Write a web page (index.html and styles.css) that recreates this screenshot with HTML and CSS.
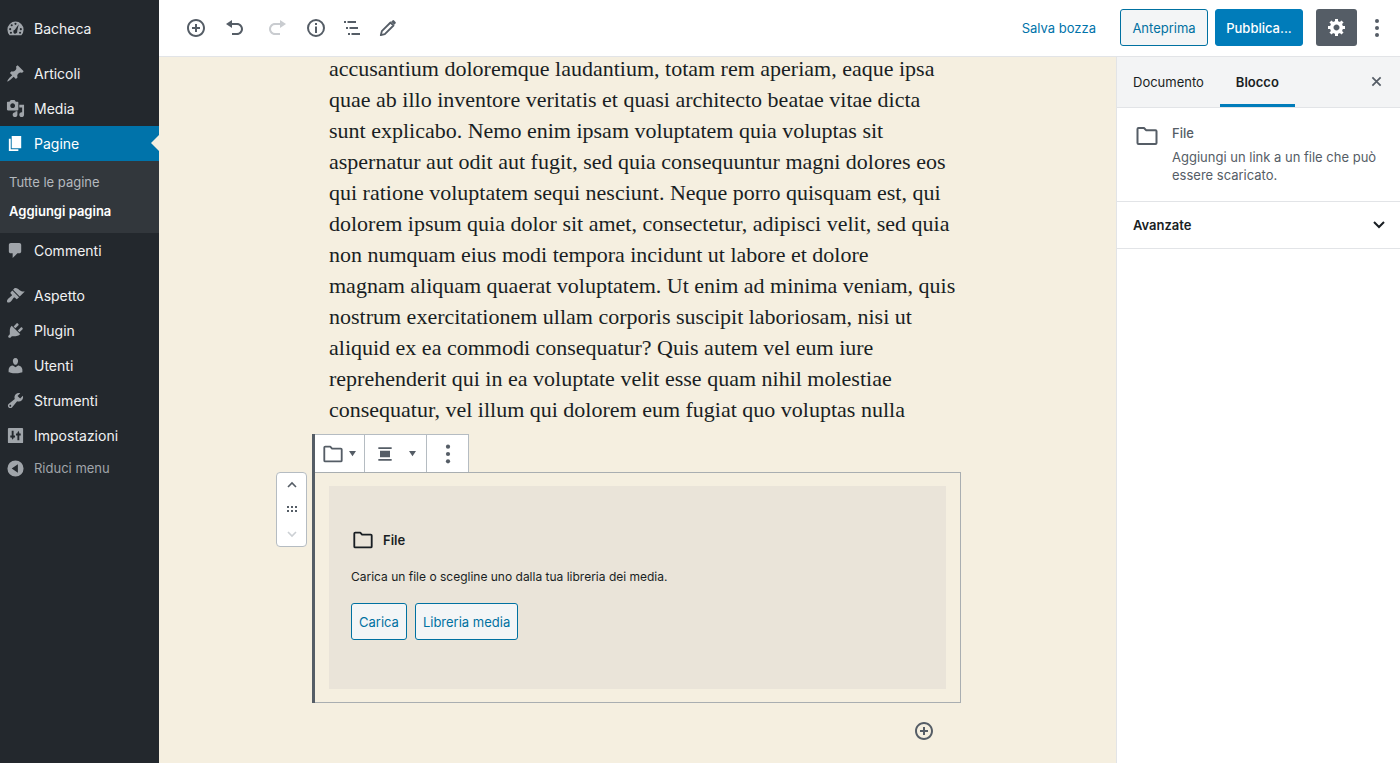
FILE: index.html
```html
<!DOCTYPE html>
<html lang="it">
<head>
<meta charset="utf-8">
<title>Aggiungi pagina</title>
<link rel="stylesheet" href="styles.css">
</head>
<body>
<svg class="sprite" aria-hidden="true">
  <symbol id="folder" viewBox="0 0 24 24"><path d="M3.500 4h5.500l2 2.200h9.500q1 0 1 1v11.800q0 1-1 1h-17q-1 0-1-1V5q0-1 1-1z" fill="none" stroke="currentColor" stroke-width="2" stroke-linejoin="round"/></symbol>
  <symbol id="insert" viewBox="0 0 20 20"><path d="M10 1c-5 0-9 4-9 9s4 9 9 9 9-4 9-9-4-9-9-9zm0 16c-3.9 0-7-3.1-7-7s3.1-7 7-7 7 3.1 7 7-3.1 7-7 7zm1-11H9v3H6v2h3v3h2v-3h3V9h-3V6z"/></symbol>
  <symbol id="dots" viewBox="0 0 20 20"><circle cx="10" cy="3" r="2"/><circle cx="10" cy="10" r="2"/><circle cx="10" cy="17" r="2"/></symbol>
</svg>
<div class="app">
  <nav class="menu" aria-label="Menu principale">
    <a class="item" href="#"><svg viewBox="0 0 20 20"><path fill-rule="evenodd" d="M3.8 17A8.6 8.6 0 0 1 1.5 11.2a8.5 8.5 0 0 1 17 0A8.6 8.6 0 0 1 16.2 17zM10 4a1.1 1.1 0 1 0 0 2.2A1.1 1.1 0 0 0 10 4zM6 5.5a1.1 1.1 0 1 0 0 2.2 1.1 1.1 0 0 0 0-2.2zM4.4 9.6a1.1 1.1 0 1 0 0 2.2 1.1 1.1 0 0 0 0-2.2zm11.2 0a1.1 1.1 0 1 0 0 2.2 1.1 1.1 0 0 0 0-2.2zM13.4 5.6 9.3 11.3a2.1 2.1 0 1 0 2.5 1.4zM5.2 13.4a1.1 1.1 0 1 0 0 2.2 1.1 1.1 0 0 0 0-2.2zm9.6 0a1.1 1.1 0 1 0 0 2.2 1.1 1.1 0 0 0 0-2.2z"/></svg>Bacheca</a>
    <a class="item group" href="#"><svg viewBox="0 0 20 20"><path d="M10.44 3.02l1.82-1.82 6.36 6.35-1.83 1.82c-1.05-.68-2.48-.57-3.41.36l-.75.75c-.92.93-1.04 2.35-.35 3.41l-1.83 1.82-2.41-2.41-2.8 2.79c-.42.42-3.38 2.71-3.8 2.29s1.86-3.39 2.28-3.81l2.79-2.79L4.1 9.36l1.83-1.82c1.05.69 2.48.57 3.4-.36l.75-.75c.93-.92 1.05-2.35.36-3.41z"/></svg>Articoli</a>
    <a class="item" href="#"><svg viewBox="0 0 20 20"><path d="M13 11V4c0-.55-.45-1-1-1h-1.67L9 1H5L3.67 3H2c-.55 0-1 .45-1 1v7c0 .55.45 1 1 1h10c.55 0 1-.45 1-1zM7 4.5c1.38 0 2.5 1.12 2.5 2.5S8.38 9.5 7 9.5 4.5 8.38 4.5 7 5.62 4.5 7 4.5zM14 6h5v10.5c0 1.38-1.12 2.5-2.5 2.5S14 17.88 14 16.5s1.12-2.5 2.5-2.5c.17 0 .34.02.5.05V9h-3V6zm-4 8.05V13h2v3.5c0 1.38-1.12 2.5-2.5 2.5S7 17.88 7 16.5 8.12 14 9.5 14c.17 0 .34.02.5.05z"/></svg>Media</a>
    <a class="item current" href="#"><svg viewBox="0 0 20 20"><path d="M6 15V2h10v13H6zm-1 1h8v2H3V5h2v11z"/></svg>Pagine</a>
    <div class="submenu">
      <a href="#">Tutte le pagine</a>
      <a class="selected" href="#">Aggiungi pagina</a>
    </div>
    <a class="item" href="#"><svg viewBox="0 0 20 20"><path d="M5 2h9c1.1 0 2 .9 2 2v7c0 1.1-.9 2-2 2h-2l-5 5v-5H5c-1.1 0-2-.9-2-2V4c0-1.1.9-2 2-2z"/></svg>Commenti</a>
    <a class="item group" href="#"><svg viewBox="0 0 20 20"><path d="M14.48 11.06L7.41 3.99l1.5-1.5c.5-.56 2.3-.47 3.51.32 1.21.8 1.43 1.28 2.91 2.1 1.18.64 2.45 1.26 4.45.85zm-.71.71L6.7 4.7 4.93 6.47c-.39.39-.39 1.02 0 1.41l1.06 1.06c.39.39.39 1.03 0 1.42-.6.6-1.43 1.11-2.21 1.69-.35.26-.7.53-1.01.84C1.43 14.23.4 16.08 1.4 17.07c.99 1 2.84-.03 4.18-1.36.31-.31.58-.66.85-1.02.57-.78 1.08-1.61 1.69-2.21.39-.39 1.02-.39 1.41 0l1.06 1.06c.39.39 1.02.39 1.41 0z"/></svg>Aspetto</a>
    <a class="item" href="#"><svg viewBox="0 0 20 20"><path d="M13.11 4.36L9.87 7.6 8 5.73l3.24-3.24c.35-.34 1.05-.2 1.56.32.52.51.66 1.21.31 1.55zm-8 1.77l.91-1.12 9.01 9.01-1.19.84c-.71.71-2.63 1.16-3.82 1.16H6.14L4.9 17.26c-.59.59-1.54.59-2.12 0-.59-.58-.59-1.53 0-2.12l1.24-1.24v-3.88c0-1.13.4-3.19 1.09-3.89zm7.26 3.97l3.24-3.24c.34-.35 1.04-.21 1.55.31.52.51.66 1.21.31 1.55l-3.24 3.25z"/></svg>Plugin</a>
    <a class="item" href="#"><svg viewBox="0 0 20 20"><path d="M10 9.25c-2.27 0-2.73-3.44-2.73-3.44C7 4.02 7.82 2 9.97 2c2.16 0 2.98 2.02 2.71 3.81 0 0-.41 3.44-2.68 3.44zm0 2.57L12.72 10c2.39 0 4.52 2.33 4.52 4.53v2.49s-3.65 1.13-7.24 1.13c-3.65 0-7.24-1.13-7.24-1.13v-2.49c0-2.25 1.94-4.48 4.47-4.48z"/></svg>Utenti</a>
    <a class="item" href="#"><svg viewBox="0 0 20 20"><path d="M16.68 9.77c-1.34 1.34-3.3 1.67-4.95.99l-5.41 6.52c-.99.99-2.59.99-3.58 0s-.99-2.59 0-3.57l6.52-5.42c-.68-1.65-.35-3.61.99-4.95 1.28-1.28 3.12-1.62 4.72-1.06l-2.89 2.89 2.82 2.82 2.86-2.87c.53 1.58.18 3.39-1.08 4.65zM3.81 16.21c.4.39 1.04.39 1.43 0 .4-.4.4-1.04 0-1.43-.39-.4-1.03-.4-1.43 0-.39.39-.39 1.03 0 1.43z"/></svg>Strumenti</a>
    <a class="item" href="#"><svg viewBox="0 0 20 20"><path fill-rule="evenodd" d="M3 2h14q1 0 1 1v14q0 1-1 1H3q-1 0-1-1V3q0-1 1-1zm3 3v5H4.500v2H6v.5l1 2 1-2V12h1.500v-2H8V5zm6.500 10h1.500v-5h1.500V8H14V7l-1-2-1 2v1h-1.500v2H12v5z"/></svg>Impostazioni</a>
    <button class="item collapse" type="button"><svg viewBox="0 0 20 20"><path fill-rule="evenodd" d="M10 1.500a8.500 8.500 0 1 0 0 17 8.500 8.500 0 0 0 0-17zM12.500 5.500v9L6 10z"/></svg>Riduci menu</button>
  </nav>

  <div class="workspace">
    <header class="topbar">
      <div class="tools">
        <button type="button" aria-label="Aggiungi blocco"><svg viewBox="0 0 20 20"><use href="#insert"/></svg></button>
        <button class="wide" type="button" aria-label="Annulla"><svg viewBox="0 0 20 20"><path d="M12 5H7V2L1 6l6 4V7h5c2.200 0 4 1.800 4 4s-1.800 4-4 4H7v2h5c3.300 0 6-2.700 6-6s-2.700-6-6-6z"/></svg></button>
        <button class="wide" type="button" aria-label="Ripeti" disabled><svg viewBox="0 0 20 20"><path d="M8 5h5V2l6 4-6 4V7H8c-2.200 0-4 1.800-4 4s1.800 4 4 4h5v2H8c-3.300 0-6-2.700-6-6s2.700-6 6-6z"/></svg></button>
        <button type="button" aria-label="Struttura del contenuto"><svg viewBox="0 0 20 20"><path fill-rule="evenodd" d="M10 1a9 9 0 1 0 0 18 9 9 0 0 0 0-18zm0 2a7 7 0 1 1 0 14 7 7 0 0 1 0-14zM9 5h2v2H9zM9 8.500h2V15H9z"/></svg></button>
        <button type="button" aria-label="Navigazione blocchi"><svg viewBox="0 0 20 20"><path d="M2 3h2v2H2zM5.500 3H14v2H5.500zM4 9h2v2H4zM7.500 9H16v2H7.500zM6 15h2v2H6zM9.500 15H18v2H9.500z"/></svg></button>
        <button type="button" aria-label="Modalità"><svg viewBox="0 0 20 20"><path d="M2.800 17.200l1-4 8.700-8.700 3 3-8.700 8.700z" fill="none" stroke="currentColor" stroke-width="1.800" stroke-linejoin="round"/><path d="M13.200 3.800l1.300-1.300q.8-.8 1.600 0l1.400 1.400q.8.800 0 1.600l-1.300 1.300z"/></svg></button>
      </div>
      <div class="actions">
        <button class="link" type="button">Salva bozza</button>
        <button class="btn" type="button">Anteprima</button>
        <button class="btn primary" type="button">Pubblica...</button>
        <button class="gear" type="button" aria-label="Impostazioni"><svg viewBox="0 0 19 21"><path fill-rule="evenodd" d="M18 12h-2.180c-.17.7-.44 1.350-.81 1.930l1.540 1.540-2.100 2.100-1.540-1.540c-.58.36-1.230.63-1.910.79V19H8v-2.180c-.68-.16-1.330-.43-1.910-.79l-1.540 1.540-2.120-2.120 1.540-1.540c-.36-.58-.63-1.230-.79-1.910H1V9.030h2.170c.16-.7.44-1.350.8-1.940L2.430 5.550l2.100-2.100 1.540 1.540c.58-.37 1.240-.64 1.930-.81V2h3v2.180c.68.16 1.330.43 1.910.79l1.540-1.540 2.120 2.120-1.540 1.540c.36.59.64 1.240.8 1.940H18V12zm-8.500 1.500c1.660 0 3-1.340 3-3s-1.340-3-3-3-3 1.340-3 3 1.340 3 3 3z"/></svg></button>
        <button class="more" type="button" aria-label="Altro"><svg viewBox="0 0 20 20"><use href="#dots"/></svg></button>
      </div>
    </header>

    <div class="body">
      <main class="canvas">
        <div class="content">
          <p class="prose">accusantium doloremque laudantium, totam rem aperiam, eaque ipsa<br>quae ab illo inventore veritatis et quasi architecto beatae vitae dicta<br>sunt explicabo. Nemo enim ipsam voluptatem quia voluptas sit<br>aspernatur aut odit aut fugit, sed quia consequuntur magni dolores eos<br>qui ratione voluptatem sequi nesciunt. Neque porro quisquam est, qui<br>dolorem ipsum quia dolor sit amet, consectetur, adipisci velit, sed quia<br>non numquam eius modi tempora incidunt ut labore et dolore<br>magnam aliquam quaerat voluptatem. Ut enim ad minima veniam, quis<br>nostrum exercitationem ullam corporis suscipit laboriosam, nisi ut<br>aliquid ex ea commodi consequatur? Quis autem vel eum iure<br>reprehenderit qui in ea voluptate velit esse quam nihil molestiae<br>consequatur, vel illum qui dolorem eum fugiat quo voluptas nulla</p>
          <section class="selection">
            <div class="mover">
              <button type="button" aria-label="Sposta in alto"><svg viewBox="0 0 12 12"><path d="M2 8l4-4 4 4" fill="none" stroke="currentColor" stroke-width="1.600"/></svg></button>
              <button type="button" aria-label="Trascina"><svg viewBox="0 0 12 12"><path d="M1 3h2v2H1zM5 3h2v2H5zM9 3h2v2H9zM1 7h2v2H1zM5 7h2v2H5zM9 7h2v2H9z"/></svg></button>
              <button type="button" aria-label="Sposta in basso" disabled><svg viewBox="0 0 12 12"><path d="M2 4l4 4 4-4" fill="none" stroke="currentColor" stroke-width="1.600"/></svg></button>
            </div>
            <div class="toolbar">
              <button class="type" type="button" aria-label="Cambia tipo di blocco"><svg class="icon" viewBox="0 0 24 24"><use href="#folder"/></svg><svg class="caret" viewBox="0 0 8 8"><path d="M0 1h8L4 7z"/></svg></button>
              <button class="align" type="button" aria-label="Allineamento"><svg class="icon" viewBox="0 0 24 24"><path d="M4 4h16v2H4zM6 8h12v8H6zM4 18h16v2H4z"/></svg><svg class="caret" viewBox="0 0 8 8"><path d="M0 1h8L4 7z"/></svg></button>
              <button class="options" type="button" aria-label="Altre opzioni"><svg class="icon" viewBox="0 0 24 24"><circle cx="12" cy="4" r="2.300"/><circle cx="12" cy="12" r="2.300"/><circle cx="12" cy="20" r="2.300"/></svg></button>
            </div>
            <div class="frame">
              <div class="placeholder">
                <h2><svg viewBox="0 0 24 24"><use href="#folder"/></svg>File</h2>
                <p>Carica un file o scegline uno dalla tua libreria dei media.</p>
                <div class="choices">
                  <button class="btn" type="button">Carica</button>
                  <button class="btn" type="button">Libreria media</button>
                </div>
              </div>
            </div>
          </section>
          <button class="append" type="button" aria-label="Aggiungi blocco"><svg viewBox="0 0 20 20"><use href="#insert"/></svg></button>
        </div>
      </main>

      <aside class="settings">
        <div class="tabs">
          <button type="button">Documento</button>
          <button class="active" type="button">Blocco</button>
          <button class="close" type="button" aria-label="Chiudi"><svg viewBox="0 0 12 12"><path d="M1.500 1.500l9 9M10.500 1.500l-9 9" fill="none" stroke="currentColor" stroke-width="1.900"/></svg></button>
        </div>
        <div class="card">
          <svg viewBox="0 0 24 24"><use href="#folder"/></svg>
          <div>
            <h2>File</h2>
            <p>Aggiungi un link a un file che può essere scaricato.</p>
          </div>
        </div>
        <button class="panel" type="button">Avanzate<svg viewBox="0 0 14 14"><path d="M2 4l5 5 5-5" fill="none" stroke="currentColor" stroke-width="2"/></svg></button>
      </aside>
    </div>
  </div>
</div>
</body>
</html>
```
FILE: styles.css
```css
* { box-sizing: border-box; }
body { margin: 0; font: 13px/18px Inter, "Liberation Sans", sans-serif; color: #191e23; }
button { margin: 0; padding: 0; border: 0; background: none; font: inherit; color: inherit; cursor: pointer; }
h2, p { margin: 0; }
a { text-decoration: none; }
svg { display: block; flex: none; fill: currentColor; }
.sprite { position: absolute; width: 0; height: 0; }
.app { display: flex; height: 100vh; overflow: hidden; background: #fff; }

.menu { flex: none; width: 159px; padding-top: 11px; background: #23282d; }
.item { position: relative; display: flex; align-items: center; gap: 9px; width: 100%; height: 35px; padding-left: 6px; font-size: 14px; color: #f1f2f3; }
.item svg { width: 19px; height: 19px; color: #a0a5aa; }
.group { margin-top: 10px; }
.current { background: #0073aa; color: #fff; }
.current svg { color: #fff; }
.current::after { content: ""; position: absolute; right: 0; top: 9px; border: 8px solid transparent; border-left: 0; border-right-color: #f5efe0; }
.submenu { padding: 7px 0; background: #32373c; }
.submenu a { display: block; padding-left: 9px; line-height: 29px; color: #b4b9be; }
.submenu .selected { font-weight: 600; color: #fff; }
.collapse { height: 30px; font-size: 13px; color: #a0a5aa; }

.workspace { flex: 1; min-width: 0; display: flex; flex-direction: column; }
.topbar { flex: none; display: flex; align-items: center; justify-content: space-between; height: 57px; padding: 0 13px 1px 19px; border-bottom: 1px solid #e2e4e7; }
.tools, .actions { display: flex; align-items: center; }
.tools button { display: grid; place-items: center; width: 36px; height: 36px; color: #555d66; }
.tools .wide { width: 42px; }
.tools button:disabled { color: #c9ccd0; }
.tools svg { width: 20px; height: 20px; }
.link { margin-right: 24px; color: #0073aa; }
.btn { height: 37px; padding: 0 7px; border: 1px solid #0071a1; border-radius: 3px; background: #f3f5f6; color: #0071a1; }
.actions .btn { width: 88px; padding: 0; margin-right: 7px; }
.actions .primary { margin-right: 13px; border-color: #007cba; background: #007cba; color: #fff; font-weight: 500; }
.gear { display: grid; place-items: center; width: 41px; height: 37px; margin-right: 10px; border-radius: 3px; background: #555d66; color: #fff; }
.gear svg { width: 19px; height: 21px; }
.more { color: #555d66; }
.more svg { width: 20px; height: 20px; }

.body { flex: 1; min-height: 0; display: flex; }
.canvas { flex: 1; min-width: 0; padding-right: 2px; overflow: hidden; background: #f5efe0; }
.content { display: flex; flex-direction: column; max-width: 649px; margin: -4px auto 0; }
.prose { padding: 0 0 9px 17px; font: 22px/31px "Liberation Serif", serif; white-space: nowrap; }
.selection { position: relative; border-left: 3px solid #555d66; }
.mover { position: absolute; left: -39px; top: 38px; display: flex; flex-direction: column; width: 31px; height: 75px; border: 1px solid #b5bcc2; border-radius: 4px; background: #fff; color: #555d66; }
.mover button { flex: 1; display: grid; place-items: center; }
.mover button:disabled { color: #ccd0d4; }
.mover svg { width: 12px; height: 12px; }
.toolbar { display: flex; width: fit-content; height: 38px; border-top: 1px solid #b5bcc2; background: #fff; color: #555d66; }
.toolbar button { display: flex; align-items: center; border-right: 1px solid #b5bcc2; }
.toolbar .icon { width: 22px; height: 22px; }
.toolbar .caret { width: 7px; height: 7px; }
.type { gap: 5px; padding: 0 8px 0 7px; }
.align { gap: 14px; padding: 0 10px; }
.toolbar .align .icon { width: 20px; }
.options { width: 42px; justify-content: center; }
.frame { padding: 13px 14px; border: 1px solid #a9aeb1; border-left: 0; }
.placeholder { display: flex; flex-direction: column; align-items: flex-start; gap: 16px; padding: 43px 22px 49px; background: #eae4d9; }
.placeholder h2 { display: flex; align-items: center; gap: 8px; font-size: 13px; line-height: 22px; font-weight: 600; }
.placeholder p { font-size: 12px; line-height: 20px; }
.placeholder svg { width: 24px; height: 22px; }
.choices { display: flex; gap: 8px; }
.append { align-self: flex-end; margin: 18px 27px 0 0; color: #555d66; }
.append svg { width: 20px; height: 20px; }

.settings { flex: none; width: 284px; border-left: 1px solid #e2e4e7; background: #fff; }
.tabs { display: flex; height: 51px; border-bottom: 1px solid #e2e4e7; background: #f3f4f5; }
.tabs button { padding: 2px 16px 0; border-bottom: 3px solid transparent; }
.tabs .active { border-bottom-color: #007cba; font-weight: 600; }
.tabs .close { margin-left: auto; padding: 2px 18px 0; color: #555d66; }
.close svg { width: 11px; height: 11px; }
.card { display: flex; gap: 13px; padding: 16px 16px 17px 18px; border-bottom: 1px solid #e2e4e7; color: #555d66; }
.card > svg { width: 24px; height: 24px; }
.card h2 { margin-bottom: 6px; font-size: 13px; font-weight: 500; }
.panel { display: flex; align-items: center; justify-content: space-between; width: 100%; height: 47px; padding: 0 14px 0 16px; border-bottom: 1px solid #e2e4e7; font-weight: 600; }
.panel svg { width: 14px; height: 14px; }
```
